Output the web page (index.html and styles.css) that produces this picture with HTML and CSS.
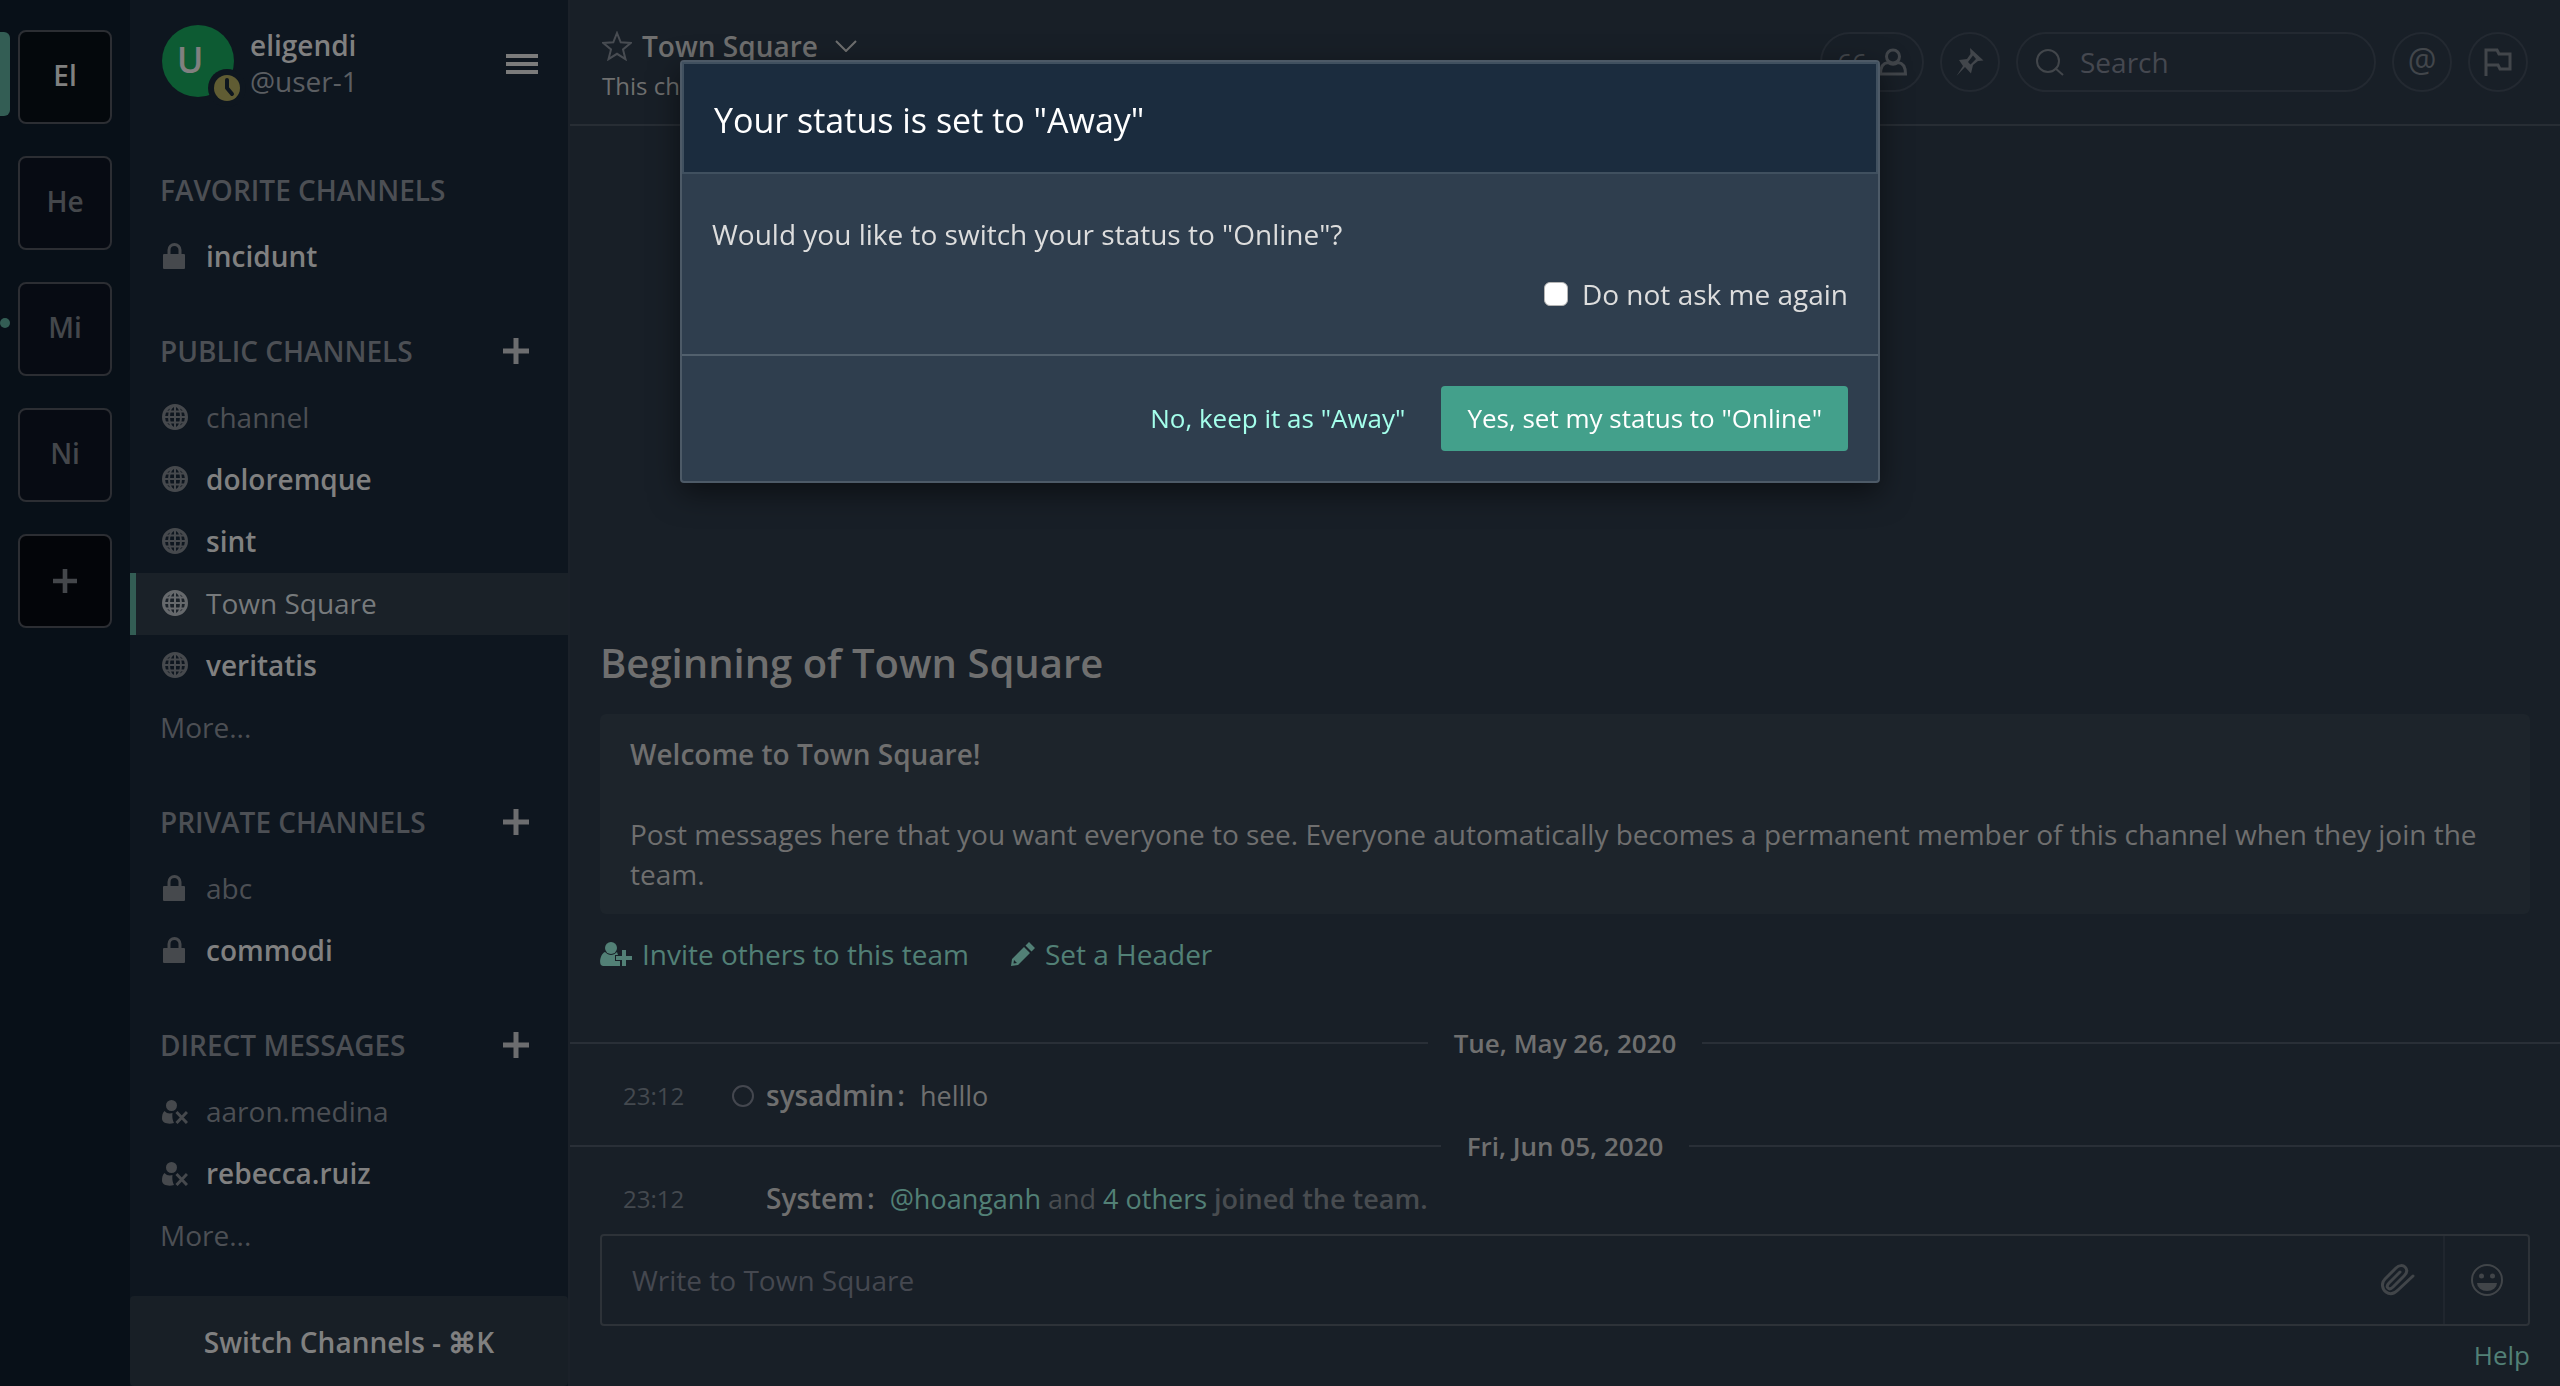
FILE: index.html
```html
<!DOCTYPE html>
<html lang="en">
<head>
<meta charset="utf-8">
<title>Town Square</title>
<link rel="stylesheet" href="styles.css">
</head>
<body>
<svg class="sprite" aria-hidden="true">
  <symbol id="lock" viewBox="0 0 26 26"><path d="M7 12V7a5.500 5.500 0 0 1 11 0v5" fill="none" stroke="currentColor" stroke-width="3"/><rect x="1" y="11" width="22" height="15" rx="1" fill="currentColor"/></symbol>
  <symbol id="globe" viewBox="0 0 26 26"><g fill="none" stroke="currentColor" stroke-width="2"><circle cx="13" cy="13" r="11.5" stroke-width="3"/><ellipse cx="13" cy="13" rx="6" ry="11.5"/><path d="M13 1v24M2 13h22M4 7.5h18M4 18.5h18"/></g></symbol>
  <symbol id="userx" viewBox="0 0 26 26"><circle cx="9.500" cy="7.500" r="5.500" fill="currentColor"/><path d="M2.500 13c2 2.500 5.500 3 8 2-.5 4 0 7 1.500 10-5 1.500-12 .5-12-4.500 0-3 .5-6 2.500-7.500Z" fill="currentColor"/><path d="m14.500 14 10.500 11m0-11-10.500 11" stroke="currentColor" stroke-width="3"/></symbol>
  <symbol id="plus" viewBox="0 0 26 26"><path d="M13 0v26M0 13h26" stroke="currentColor" stroke-width="5"/></symbol>
</svg>
<div class="app">
  <nav class="teams" aria-label="Teams">
    <button class="team team-active">El</button>
    <button class="team">He</button>
    <button class="team team-unread">Mi</button>
    <button class="team">Ni</button>
    <button class="team team-add" aria-label="Add team"><svg class="add-icon"><use href="#plus"/></svg></button>
  </nav>
  <aside class="sidebar">
    <header class="profile">
      <div class="avatar">U
        <svg class="presence" viewBox="0 0 38 38"><circle cx="19" cy="19" r="19" fill="#0e161f"/><circle cx="19" cy="19" r="13" fill="#605c33"/><path d="M19 11v8l5 6" fill="none" stroke="#0e161f" stroke-width="4" stroke-linecap="round" stroke-linejoin="round"/></svg>
      </div>
      <div class="who"><strong>eligendi</strong><span>@user-1</span></div>
      <button class="menu" aria-label="Menu"><svg width="32" height="20"><path d="M0 2h32M0 10h32M0 18h32" stroke="currentColor" stroke-width="4"/></svg></button>
    </header>
    <div class="channels">
      <h2 class="group">FAVORITE CHANNELS</h2>
      <a class="row unread" href="#"><svg class="ico"><use href="#lock"/></svg>incidunt</a>
      <h2 class="group">PUBLIC CHANNELS <button class="plus" aria-label="Add public channel"><svg class="plus-icon"><use href="#plus"/></svg></button></h2>
      <a class="row" href="#"><svg class="ico"><use href="#globe"/></svg>channel</a>
      <a class="row unread" href="#"><svg class="ico"><use href="#globe"/></svg>doloremque</a>
      <a class="row unread" href="#"><svg class="ico"><use href="#globe"/></svg>sint</a>
      <a class="row current" href="#"><svg class="ico"><use href="#globe"/></svg>Town Square</a>
      <a class="row unread" href="#"><svg class="ico"><use href="#globe"/></svg>veritatis</a>
      <a class="row" href="#">More...</a>
      <h2 class="group">PRIVATE CHANNELS <button class="plus" aria-label="Add private channel"><svg class="plus-icon"><use href="#plus"/></svg></button></h2>
      <a class="row" href="#"><svg class="ico"><use href="#lock"/></svg>abc</a>
      <a class="row unread" href="#"><svg class="ico"><use href="#lock"/></svg>commodi</a>
      <h2 class="group">DIRECT MESSAGES <button class="plus" aria-label="New direct message"><svg class="plus-icon"><use href="#plus"/></svg></button></h2>
      <a class="row" href="#"><svg class="ico"><use href="#userx"/></svg>aaron.medina</a>
      <a class="row unread" href="#"><svg class="ico"><use href="#userx"/></svg>rebecca.ruiz</a>
      <a class="row" href="#">More...</a>
    </div>
    <button class="switcher">Switch Channels - ⌘K</button>
  </aside>
  <main class="center">
    <header class="topbar">
      <div class="heading">
        <h1 class="name">
          <svg class="star" viewBox="0 0 30 30"><path d="m15 2 3.700 9.300 10 .7-7.700 6.400 2.500 9.800L15 22.800l-8.500 5.400L9 18.400 1.300 12l10-.7Z" fill="none" stroke="currentColor" stroke-width="2"/></svg>
          Town Square
          <svg class="chevron" viewBox="0 0 22 12"><path d="m1 1 10 10L21 1" fill="none" stroke="currentColor" stroke-width="2"/></svg>
        </h1>
        <p class="purpose">This channel</p>
      </div>
      <button class="pill members">66 <svg width="28" height="28" viewBox="0 0 28 28"><circle cx="14" cy="8.500" r="6.500" fill="none" stroke="currentColor" stroke-width="3"/><path d="M9 14.500c-5 .5-7.500 4-7.500 11.500h25c0-7.500-2.500-11-7.500-11.500-3 2-7 2-10 0Z" fill="none" stroke="currentColor" stroke-width="3"/></svg></button>
      <button class="pill" aria-label="Pinned posts"><svg width="28" height="30" viewBox="0 0 28 30"><path d="m14 1 13.500 12.500-5.500.5-5 4-2 8.500-6-6.500-8.500 9L7 19l-4-6 8-1 3.500-5ZM17 8.500 12 15l2.500 2.500L20 12Z" fill="currentColor" fill-rule="evenodd"/></svg></button>
      <label class="pill search"><svg width="28" height="28" viewBox="0 0 28 28"><circle cx="12" cy="13" r="11" fill="none" stroke="currentColor" stroke-width="2"/><path d="m19 20 8 7" stroke="currentColor" stroke-width="2"/></svg><input class="search-field" type="text" placeholder="Search" aria-label="Search"></label>
      <button class="pill at" aria-label="Mentions">@</button>
      <button class="pill" aria-label="Flagged posts"><svg width="28" height="28" viewBox="0 0 28 28"><path d="M2 28V2h11l2 4h11v15H16l-2-4H2" fill="none" stroke="currentColor" stroke-width="3"/></svg></button>
    </header>
    <section class="posts">
      <h2 class="intro-title">Beginning of Town Square</h2>
      <div class="intro">
        <strong>Welcome to Town Square!</strong>
        <p>Post messages here that you want everyone to see. Everyone automatically becomes a permanent member of this channel when they join the team.</p>
      </div>
      <div class="actions">
        <a class="link action" href="#"><svg width="32" height="26" viewBox="0 0 32 26"><circle cx="11" cy="7" r="6" fill="currentColor"/><path d="M5 11c4 4 8 4 12 0l1 3h-3v6h5v5H3c-5 0-3-12 2-14Z" fill="currentColor"/><path d="M24 9v16M16 17h16" stroke="currentColor" stroke-width="4"/></svg>Invite others to this team</a>
        <a class="link action" href="#"><svg width="24" height="24" viewBox="0 0 24 24"><path d="m18 0 6 6-3.500 3.500-6-6ZM13 5l6 6L7 23l-7 1 1-7ZM3 18l-.5 3.500L6 21Z" fill="currentColor" fill-rule="evenodd"/></svg>Set a Header</a>
      </div>
      <div class="date">Tue, May 26, 2020</div>
      <article class="post"><time>23:12</time><svg class="offline" viewBox="0 0 22 22"><circle cx="11" cy="11" r="10" fill="none" stroke="currentColor" stroke-width="2"/></svg><p class="said"><strong class="author">sysadmin</strong><b class="colon">:</b> helllo</p></article>
      <div class="date">Fri, Jun 05, 2020</div>
      <article class="post"><time>23:12</time><span></span><p class="said system"><strong class="author">System</strong><b class="colon">:</b> <a class="link" href="#">@hoanganh</a> and <a class="link" href="#">4 others</a> <b>joined the team.</b></p></article>
    </section>
    <footer class="composer">
      <div class="box">
        <input class="write" type="text" placeholder="Write to Town Square" aria-label="Write to Town Square">
        <button class="tool" aria-label="Attach"><svg width="34" height="32" viewBox="0 0 34 32"><path d="M32 12 17 26c-4 4-8 5-12 2S0 19 4 15L15 4c3-3 7-3 9-1s3 5-1 9L12 23c-2 2-4 2-5 1s-1-3 1-5L19 8" fill="none" stroke="currentColor" stroke-width="3" stroke-linecap="round"/></svg></button>
        <button class="tool emoji" aria-label="Emoji"><svg width="32" height="32" viewBox="0 0 32 32"><circle cx="16" cy="16" r="15" fill="none" stroke="currentColor" stroke-width="2"/><circle cx="10.500" cy="12" r="2.500" fill="currentColor"/><circle cx="21.500" cy="12" r="2.500" fill="currentColor"/><path d="M6 19h20a10 8 0 0 1-20 0Z" fill="currentColor"/></svg></button>
      </div>
      <a class="link help" href="#">Help</a>
    </footer>
  </main>
</div>
<div class="overlay">
  <section class="dialog" role="dialog" aria-labelledby="dialog-title">
    <h2 class="dialog-title" id="dialog-title">Your status is set to "Away"</h2>
    <div class="dialog-body">
      <p>Would you like to switch your status to "Online"?</p>
      <label class="again"><input class="tick" type="checkbox">Do not ask me again</label>
    </div>
    <div class="dialog-foot">
      <button class="btn btn-link">No, keep it as "Away"</button>
      <button class="btn btn-primary">Yes, set my status to "Online"</button>
    </div>
  </section>
</div>
</body>
</html>
```
FILE: styles.css
```css
* { box-sizing: border-box; }
body { margin: 0; background: #181f27; color: #6f6f6f; font: 28px/40px "Open Sans", sans-serif; }
h1, h2, p { margin: 0; font-size: inherit; font-weight: inherit; }
strong, b { font-weight: 600; }
button, input { margin: 0; padding: 0; border: 0; background: none; color: inherit; font: inherit; outline: 0; }
a { color: inherit; text-decoration: none; }
svg { display: block; flex: none; }
.sprite { position: absolute; width: 0; height: 0; }
.app { display: grid; grid-template-columns: 130px 440px minmax(0, 1fr); min-height: 100vh; }

.teams { display: flex; flex-direction: column; gap: 32px; padding: 30px 18px; background: #081018; }
.team { position: relative; height: 94px; padding-bottom: 4px; border: 2px solid #2c2e33; border-radius: 8px; background: #070b13; color: #44474b; font-weight: 600; }
.team-active { background: #04080c; color: #808080; }
.team-add { display: grid; place-items: center; padding: 0; background: #030509; }
.team-active::before, .team-unread::before { content: ""; position: absolute; left: -20px; width: 10px; background: #335d54; }
.team-active::before { top: 0; height: 84px; border-radius: 0 6px 6px 0; }
.team-unread::before { top: 34px; height: 10px; border-radius: 5px; }
.add-icon { width: 24px; height: 24px; }

.sidebar { display: flex; flex-direction: column; border-right: 2px solid #1b2129; background: #0e161f; color: #4c4f54; }
.profile { display: flex; align-items: flex-start; height: 127px; padding: 25px 30px 0 32px; color: #808080; }
.avatar { position: relative; width: 72px; height: 72px; padding-right: 16px; border-radius: 50%; background: #0d5b33; font-size: 36px; font-weight: 600; line-height: 70px; text-align: center; }
.presence { position: absolute; left: 46px; top: 44px; width: 38px; height: 38px; }
.who { display: flex; flex-direction: column; flex: 1; padding: 2px 0 0 16px; line-height: 36px; }
.who span { color: #5b5e62; }
.menu { margin-top: 29px; color: #7b7b7b; }
.channels { flex: 1; }
.group { display: flex; align-items: center; justify-content: space-between; padding: 44px 39px 17px 30px; font-weight: 600; line-height: 38px; }
.plus { color: #6c6d6f; }
.plus-icon { width: 26px; height: 26px; }
.row { display: flex; align-items: center; height: 62px; padding: 0 30px 2px 30px; line-height: 60px; }
.ico { width: 26px; height: 26px; margin: 0 18px 0 2px; color: #46494d; }
.unread { color: #808080; font-weight: 600; }
.current { padding-left: 24px; border-left: 6px solid #335d54; background: #1a2128; color: #777a7c; }
.current .ico { color: #66696c; }
.switcher { height: 90px; padding-top: 2px; border-radius: 4px; background: #181f26; color: #808080; font-weight: 600; }

.center { display: flex; flex-direction: column; min-width: 0; }
.topbar { display: flex; align-items: center; gap: 16px; height: 126px; padding: 0 32px; border-bottom: 2px solid #272d34; color: #42464b; }
.heading { flex: 1; padding-top: 8px; color: #6f6f6f; }
.name { display: flex; align-items: center; font-weight: 600; }
.star { width: 30px; height: 30px; margin-right: 10px; color: #484c52; }
.chevron { width: 22px; height: 12px; margin-left: 17px; }
.purpose { font-size: 24px; }
.pill { display: flex; align-items: center; justify-content: center; gap: 12px; width: 60px; height: 60px; border: 2px solid #232931; border-radius: 30px; }
.members { width: 104px; font-size: 26px; }
.at { padding-bottom: 4px; font-size: 32px; }
.search { justify-content: flex-start; gap: 16px; width: 360px; padding-left: 18px; }
.search-field { width: 260px; }
input::placeholder { color: #454850; opacity: 1; }
.posts { display: flex; flex: 1; flex-direction: column; justify-content: flex-end; padding-bottom: 5px; }
.intro-title { margin: 0 30px; font-size: 40px; font-weight: 600; line-height: 56px; }
.intro { margin: 23px 30px 20px; padding: 20px 30px; border-radius: 6px; background: #1d242b; }
.intro p { margin-top: 40px; }
.actions { display: flex; gap: 42px; margin: 0 30px 49px; }
.link { color: #528076; }
.action { display: flex; align-items: center; gap: 10px; }
.date { display: flex; align-items: center; gap: 26px; font-size: 26px; font-weight: 600; }
.date::before, .date::after { content: ""; flex: 1; height: 2px; background: #292f37; }
.post { display: grid; grid-template-columns: 109px 34px 1fr; align-items: center; padding: 13px 30px 10px 53px; }
.post time { color: #44494f; font-size: 24px; }
.offline { width: 22px; height: 22px; color: #44474f; }
.said { font-size: 27px; }
.author, .colon { font-size: 28px; line-height: 28px; }
.colon { margin: 0 8px 0 3px; }
.system { color: #484c50; }
.system .author, .system .colon { color: #6f6f6f; }
.composer { display: flex; flex-direction: column; padding: 0 30px 11px; }
.box { display: flex; height: 92px; border: 2px solid #2d3238; border-radius: 4px; }
.write { flex: 1; padding-left: 30px; }
.tool { display: grid; place-items: center; width: 90px; color: #414549; }
.emoji { width: 85px; border-left: 2px solid #20262e; }
.help { align-self: flex-end; margin-top: 9px; font-size: 26px; }

.overlay { position: fixed; inset: 0; display: flex; align-items: flex-start; justify-content: center; padding-top: 60px; }
.dialog { width: 1200px; border: 2px solid #4d5a67; border-radius: 4px; background: #2f3e4e; color: #dddddd; box-shadow: 0 10px 30px rgba(0, 0, 0, 0.5); }
.dialog-title { padding: 36px 30px 32px; border: 2px solid #40505f; background: #1b2c3e; color: #ffffff; font-size: 34px; line-height: 40px; }
.dialog-body { display: flex; flex-direction: column; gap: 20px; padding: 40px 30px; border-bottom: 2px solid #52606d; }
.again { display: flex; align-items: center; align-self: flex-end; gap: 14px; }
.tick { width: 24px; height: 24px; appearance: none; border: 1px solid #b4b4b4; border-radius: 6px; background: #ffffff; }
.dialog-foot { display: flex; justify-content: flex-end; gap: 10px; padding: 30px; }
.btn { padding: 0 26px; border-radius: 4px; font-size: 26px; line-height: 65px; }
.btn-link { color: #a4ffeb; }
.btn-primary { background: #43a08b; color: #ffffff; }
```
